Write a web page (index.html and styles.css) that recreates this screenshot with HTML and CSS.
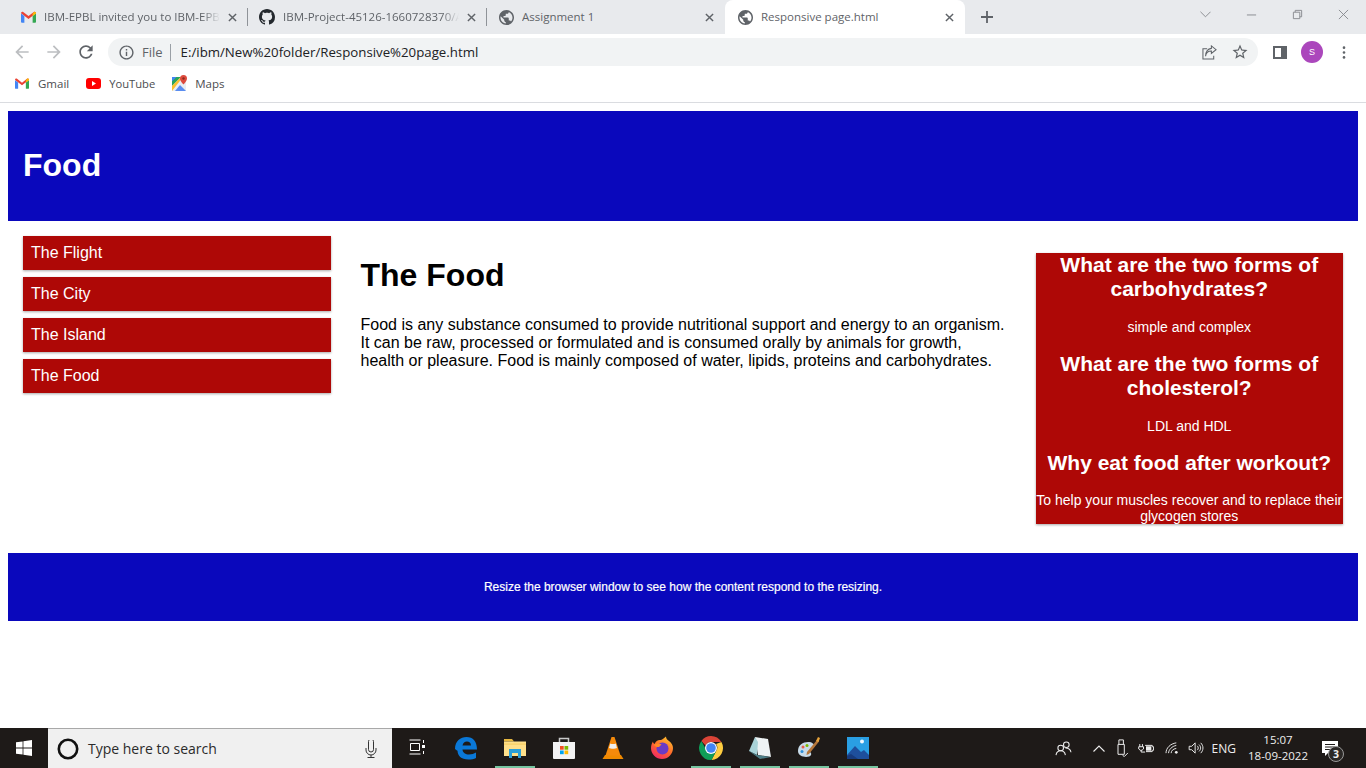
FILE: index.html
```html
<!DOCTYPE html>
<html lang="en">
<head>
<meta charset="utf-8">
<title>Responsive page.html</title>
<link rel="stylesheet" href="styles.css">
</head>
<body>
<div class="tabstrip">
  <div class="tab tab-one">
    <svg class="favicon" viewBox="0 0 16 12"><path fill="#ea4335" d="M0 2Q0 0 2 .4L8 5l6-4.6Q16 0 16 2L8 8z"/><path fill="#4285f4" d="M0 2.2l3.6 2.7V12H1Q0 12 0 11z"/><path fill="#34a853" d="M16 2.2l-3.6 2.7V12H15q1 0 1-1z"/><path fill="#fbbc04" d="M12.4 2.6L14 .4Q16 0 16 2v.2l-3.6 2.7z"/></svg>
    <span class="tab-title">IBM-EPBL invited you to IBM-EPB</span>
    <svg class="tab-x" viewBox="0 0 10 10"><path d="M1 1l8 8M9 1L1 9"/></svg>
  </div>
  <div class="tab">
    <svg class="favicon gh" viewBox="0 0 16 16"><path fill="#24292e" d="M8 0C3.58 0 0 3.58 0 8c0 3.54 2.29 6.53 5.47 7.59.4.07.55-.17.55-.38 0-.19-.01-.82-.01-1.49-2.01.37-2.53-.49-2.69-.94-.09-.23-.48-.94-.82-1.13-.28-.15-.68-.52-.01-.53.63-.01 1.08.58 1.23.82.72 1.21 1.87.87 2.33.66.07-.52.28-.87.51-1.07-1.78-.2-3.64-.89-3.64-3.95 0-.87.31-1.59.82-2.15-.08-.2-.36-1.02.08-2.12 0 0 .67-.21 2.2.82.64-.18 1.32-.27 2-.27.68 0 1.36.09 2 .27 1.53-1.04 2.2-.82 2.2-.82.44 1.1.16 1.92.08 2.12.51.56.82 1.27.82 2.15 0 3.07-1.87 3.75-3.65 3.95.29.25.54.73.54 1.48 0 1.07-.01 1.93-.01 2.2 0 .21.15.46.55.38A8.013 8.013 0 0016 8c0-4.42-3.58-8-8-8z"/></svg>
    <span class="tab-title">IBM-Project-45126-1660728370/A</span>
    <svg class="tab-x" viewBox="0 0 10 10"><path d="M1 1l8 8M9 1L1 9"/></svg>
  </div>
  <div class="tab tab-last">
    <svg class="favicon globe" viewBox="2 2 20 20"><path d="M12 2C6.48 2 2 6.48 2 12s4.48 10 10 10 10-4.48 10-10S17.52 2 12 2zm-1 17.93c-3.95-.49-7-3.85-7-7.93 0-.62.08-1.21.21-1.79L9 15v1c0 1.1.9 2 2 2v1.93zm6.9-2.54c-.26-.81-1-1.39-1.9-1.39h-1v-3c0-.55-.45-1-1-1H8v-2h2c.55 0 1-.45 1-1V7h2c1.1 0 2-.9 2-2v-.41c2.93 1.19 5 4.06 5 7.41 0 2.08-.8 3.97-2.1 5.39z"/></svg>
    <span class="tab-title">Assignment 1</span>
    <svg class="tab-x" viewBox="0 0 10 10"><path d="M1 1l8 8M9 1L1 9"/></svg>
  </div>
  <div class="tab tab-active">
    <svg class="favicon globe" viewBox="2 2 20 20"><path d="M12 2C6.48 2 2 6.48 2 12s4.48 10 10 10 10-4.48 10-10S17.52 2 12 2zm-1 17.93c-3.95-.49-7-3.85-7-7.93 0-.62.08-1.21.21-1.79L9 15v1c0 1.1.9 2 2 2v1.93zm6.9-2.54c-.26-.81-1-1.39-1.9-1.39h-1v-3c0-.55-.45-1-1-1H8v-2h2c.55 0 1-.45 1-1V7h2c1.1 0 2-.9 2-2v-.41c2.93 1.19 5 4.06 5 7.41 0 2.08-.8 3.97-2.1 5.39z"/></svg>
    <span class="tab-title">Responsive page.html</span>
    <svg class="tab-x" viewBox="0 0 10 10"><path d="M1 1l8 8M9 1L1 9"/></svg>
  </div>
  <svg class="newtab" viewBox="0 0 12 12"><path d="M6 0v12M0 6h12"/></svg>
  <div class="winctl">
    <svg class="win-ico chev" viewBox="0 0 12 7"><path d="M.5.5L6 6 11.5.5"/></svg>
    <svg class="win-ico" viewBox="0 0 12 12"><path d="M1 6.500h10"/></svg>
    <svg class="win-ico" viewBox="0 0 12 12"><path d="M1.500 3.500h7v7h-7zM3.500 3.500v-2h7v7h-2"/></svg>
    <svg class="win-ico" viewBox="0 0 12 12"><path d="M1 1l10 10M11 1L1 11"/></svg>
  </div>
</div>

<div class="toolbar">
  <svg class="nav-ico off" viewBox="0 0 24 24"><path d="M20 11H7.830l5.590-5.590L12 4l-8 8 8 8 1.410-1.410L7.830 13H20v-2z"/></svg>
  <svg class="nav-ico off" viewBox="0 0 24 24"><path d="M4 11h12.170l-5.590-5.590L12 4l8 8-8 8-1.410-1.410L16.170 13H4v-2z"/></svg>
  <svg class="nav-ico" viewBox="0 0 24 24"><path d="M17.65 6.35C16.2 4.9 14.21 4 12 4c-4.42 0-7.99 3.58-7.99 8s3.57 8 7.99 8c3.73 0 6.84-2.55 7.73-6h-2.08c-.82 2.33-3.04 4-5.65 4-3.31 0-6-2.69-6-6s2.69-6 6-6c1.66 0 3.14.69 4.22 1.78L13 11h7V4l-2.35 2.35z"/></svg>
  <div class="omnibox">
    <svg class="omni-info" viewBox="0 0 24 24"><path d="M11 7h2v2h-2zm0 4h2v6h-2zm1-9C6.48 2 2 6.48 2 12s4.48 10 10 10 10-4.48 10-10S17.52 2 12 2zm0 18c-4.41 0-8-3.59-8-8s3.59-8 8-8 8 3.59 8 8-3.59 8-8 8z"/></svg>
    <span class="omni-file">File</span>
    <span class="omni-url">E:/ibm/New%20folder/Responsive%20page.html</span>
    <svg class="omni-share" viewBox="0 0 16 16"><path d="M5.500 4H1v11h11.500v-3.500"/><path d="M3.800 12c.4-3.600 3-5.600 6.200-5.600V9L15 5 10 1v2.600C6.200 4 4 7.500 3.800 12z"/></svg>
    <svg class="omni-star" viewBox="0 0 24 24"><path d="M22 9.240l-7.190-.62L12 2 9.190 8.630 2 9.240l5.460 4.730L5.820 21 12 17.270 18.180 21l-1.630-7.030L22 9.240zM12 15.400l-3.760 2.270 1-4.280-3.320-2.880 4.380-.38L12 6.100l1.710 4.040 4.380.38-3.320 2.880 1 4.280L12 15.400z"/></svg>
  </div>
  <svg class="panel-ico" viewBox="0 0 14 13"><path fill-rule="evenodd" d="M0 0h14v13H0zM2 2v9h6V2z"/></svg>
  <div class="avatar">S</div>
  <svg class="dots" viewBox="0 0 4 16"><circle cx="2" cy="2" r="1.600"/><circle cx="2" cy="8" r="1.600"/><circle cx="2" cy="14" r="1.600"/></svg>
</div>

<div class="bookmarks">
  <div class="bm">
    <svg class="bm-gmail" viewBox="0 0 16 12"><path fill="#ea4335" d="M0 2Q0 0 2 .4L8 5l6-4.600Q16 0 16 2L8 8z"/><path fill="#4285f4" d="M0 2.200l3.600 2.700V12H1Q0 12 0 11z"/><path fill="#34a853" d="M16 2.200l-3.600 2.700V12H15q1 0 1-1z"/><path fill="#fbbc04" d="M12.400 2.600L14 .4Q16 0 16 2v.2l-3.600 2.700z"/></svg>
    <span>Gmail</span>
  </div>
  <div class="bm bm-tube">
    <svg class="bm-yt" viewBox="0 0 15 11"><rect width="15" height="11" rx="3" fill="#f00"/><path fill="#fff" d="M6 3l4 2.500L6 8z"/></svg>
    <span>YouTube</span>
  </div>
  <div class="bm">
    <svg class="bm-maps" viewBox="0 0 16 16"><path fill="#e9eef2" d="M0 2h14v14H0z"/><path fill="#2aa45a" d="M0 2h9L0 11z"/><path fill="#4285f4" d="M0 2h4.500L0 6.500z"/><path fill="#fbc02d" d="M0 11l9-9h2L0 16z"/><path fill="#5a8df0" d="M3 16l5-6 6 6z"/><path fill="#dd4b3e" d="M11.500 0A3.500 3.500 0 0 1 15 3.500C15 6 11.500 9.500 11.500 9.500S8 6 8 3.500A3.500 3.500 0 0 1 11.500 0z"/><circle cx="11.500" cy="3.500" r="1.200" fill="#8e2a1e"/></svg>
    <span>Maps</span>
  </div>
</div>

<div class="page">
  <header class="site-header"><h1>Food</h1></header>
  <div class="row">
    <nav class="col col-side">
      <ul class="menu">
        <li>The Flight</li>
        <li>The City</li>
        <li>The Island</li>
        <li>The Food</li>
      </ul>
    </nav>
    <main class="col col-main">
      <h1>The Food</h1>
      <p>Food is any substance consumed to provide nutritional support and energy to an organism. It can be raw, processed or formulated and is consumed orally by animals for growth, health or pleasure. Food is mainly composed of water, lipids, proteins and carbohydrates.</p>
    </main>
    <div class="col col-side">
      <aside class="aside">
        <h2>What are the two forms of carbohydrates?</h2>
        <p>simple and complex</p>
        <h2>What are the two forms of cholesterol?</h2>
        <p>LDL and HDL</p>
        <h2>Why eat food after workout?</h2>
        <p>To help your muscles recover and to replace their glycogen stores</p>
      </aside>
    </div>
  </div>
  <footer class="site-footer"><p>Resize the browser window to see how the content respond to the resizing.</p></footer>
</div>

<div class="taskbar">
  <div class="start"><svg class="winlogo" viewBox="0 0 16 16"><path d="M0 2.300l6.600-.9v6.200H0zM7.400 1.300L16 0v7.600H7.400zM0 8.400h6.600v6.200L0 13.700zM7.400 8.400H16V16l-8.600-1.300z"/></svg></div>
  <div class="search">
    <svg class="cortana" viewBox="0 0 22 22"><circle cx="11" cy="11" r="9.200"/></svg>
    <span class="search-text">Type here to search</span>
    <svg class="mic" viewBox="0 0 12 18"><path d="M3.500 1.500a2.500 2.500 0 0 1 5 0v8a2.500 2.500 0 0 1-5 0zM1 8v2a5 5 0 0 0 10 0V8M6 15v2.500M2.500 17.500h7"/></svg>
  </div>
  <div class="apps">
    <div class="app app-taskview"><svg class="taskview" viewBox="0 0 16 16"><path d="M.5 1h11M.5 15h11M1.500 4.500h9v7h-9zM14.500 1v3M14.500 12v3"/><rect class="tv-dot" x="13" y="6" width="3" height="3"/></svg></div>
    <div class="app">
      <svg class="app-ico" viewBox="0 0 24 24"><path fill="#0a78d7" d="M1 13C1 5 6.500 1 12.500 1 19 1 23 5.500 23 13.500H8.500c.3 3.500 3 5 6.500 5 2.700 0 5-.7 7-2v5.500c-2 1-4.500 1.500-7.500 1.500C7 23.500 3.500 19.500 3.500 14.500c0 .5-1.500-.5-2.500-1.500zM8.500 9.500H17c0-2.500-1.800-4-4-4-2.300 0-4 1.500-4.500 4z"/></svg>
    </div>
    <div class="app app-on">
      <svg class="app-ico" viewBox="0 0 24 24"><path fill="#e6b740" d="M1 3h8l2 2.500H1z"/><path fill="#ffe08a" d="M1 5.500h22V20H1z"/><path fill="#f6cf62" d="M1 7.500h22v1.200H1z"/><path fill="#2b9fd8" d="M6 13h12v9H15v-5H9v5H6z"/></svg>
    </div>
    <div class="app">
      <svg class="app-ico" viewBox="0 0 24 24"><path fill="none" stroke="#c9c9c9" stroke-width="1.500" d="M7.500 7V2.500h9V7"/><path fill="#f3f3f3" d="M1 6h22v16a1 1 0 0 1-1 1H2a1 1 0 0 1-1-1z"/><path fill="#f25022" d="M8 10h3.700v3.700H8z"/><path fill="#7fba00" d="M12.500 10h3.700v3.700h-3.700z"/><path fill="#00a4ef" d="M8 14.500h3.700v3.700H8z"/><path fill="#ffb900" d="M12.500 14.500h3.700v3.700h-3.700z"/></svg>
    </div>
    <div class="app">
      <svg class="app-ico" viewBox="0 0 24 24"><path fill="#f08a00" d="M1.500 23l2.500-4h16l2.500 4z"/><path fill="#f58a0b" d="M10.500 1h3l6 18.500h-15z"/><path fill="#eee" d="M9.300 7.500c1.500.7 4 .7 5.400 0l1.300 4.500c-2 1-6 1-8 0z"/></svg>
    </div>
    <div class="app">
      <svg class="app-ico" viewBox="0 0 24 24"><defs><linearGradient id="ff" x1="0.800" y1="0" x2="0.200" y2="1"><stop offset="0" stop-color="#ffc42c"/><stop offset="0.500" stop-color="#ff6a2b"/><stop offset="1" stop-color="#f0246a"/></linearGradient></defs><path fill="url(#ff)" d="M12 23A11 11 0 0 1 1 12c0-3 1-5 2-6.500 0 1 .5 2 1.500 2.500C6 5 8 3.500 11 4c2-1 4-2.500 5-3.500 0 2 1 3 3 4.500 2.500 2 4 4 4 7a11 11 0 0 1-11 11z"/><circle cx="12.500" cy="12.500" r="6" fill="#6b3bc4"/><path fill="#ff8a24" d="M4 9c2-1.500 5-2 7.500-.5L9 11c-2 .3-4-.5-5-2z"/></svg>
    </div>
    <div class="app app-on">
      <svg class="app-ico" viewBox="0 0 24 24"><path fill="#db4437" d="M12 0a12 12 0 0 1 10.400 6H12a6 6 0 0 0-5.500 3.500L2.400 5A12 12 0 0 1 12 0z"/><path fill="#ffcd40" d="M22.400 6A12 12 0 0 1 12.500 24l4.700-9A6 6 0 0 0 17 8z"/><path fill="#0f9d58" d="M2.400 5A12 12 0 0 0 12.500 24l4.700-9a6 6 0 0 1-10.700-2.500z"/><circle cx="12" cy="12" r="6" fill="#fff"/><circle cx="12" cy="12" r="4.800" fill="#4285f4"/></svg>
    </div>
    <div class="app app-on app-stack">
      <svg class="app-ico" viewBox="0 0 24 24"><path fill="#eef3f4" d="M7 1l13 2 3 18-13-2z"/><path fill="#a9d3d8" d="M7 1L1 15l8 4 1-13z"/><path fill="#4e7f88" d="M1 15l8 4 14 2-11 2z"/></svg>
    </div>
    <div class="app app-on app-stack">
      <svg class="app-ico" viewBox="0 0 24 24"><path fill="#c8dbe8" d="M1 15c0-6 5-9 10-9 4 0 7 2 6 5-1 2-4 1-4 4 0 2 2 2 1 4-1 3-13 3-13-4z"/><circle cx="6" cy="11" r="1.500" fill="#e65f4c"/><circle cx="10" cy="9.500" r="1.500" fill="#7fba00"/><circle cx="5" cy="15.500" r="1.500" fill="#2f8fd8"/><path fill="#b5763a" d="M20 4l2 1.500L12 18l-2.500 1 .5-3z"/><path fill="#e8a33a" d="M19 5l2-4 2 1-1.500 4z"/></svg>
    </div>
    <div class="app app-on">
      <svg class="app-ico" viewBox="0 0 24 24"><path fill="#2a9fe3" d="M1 1h22v22H1z"/><circle cx="16" cy="5.500" r="2" fill="#f0f8fd"/><path fill="#1e4f9c" d="M1 19l8-9 6 6 3-2 5 5v4H1z"/><path fill="#163a7d" d="M1 23v-3l4-2 7 5z"/></svg>
    </div>
  </div>
  <div class="tray">
    <svg class="tray-people" viewBox="0 0 18 16"><circle cx="12" cy="4" r="3"/><circle cx="6" cy="7.500" r="3"/><path d="M1 15c.5-3 2.500-4.500 5-4.500s4.500 1.500 5 4.500M11 7.500c3 0 5.500 1.500 6 4.500"/></svg>
    <svg class="tray-chev" viewBox="0 0 12 7"><path d="M.5 6.500L6 1l5.500 5.500"/></svg>
    <svg class="tray-usb" viewBox="0 0 14 20"><path d="M2 6h7v11H2zM3 6V1h5v5M5 3h.1M6.500 3h.1M7 18l2 1.500 4-4"/></svg>
    <svg class="tray-power" viewBox="0 0 18 12"><path d="M2 1v3M5 1v3M.8 4h5.400v2.500L4.500 8H2.500L.8 6.500zM3.500 8v2H8M8 2.500h8V4h1.500v4H16v1.500H9"/><rect class="tray-fill" x="9" y="3.500" width="6" height="5"/></svg>
    <svg class="tray-wifi" viewBox="0 0 16 14"><path d="M1 13C1 7 6 2 13 1M4 13c0-4 4-8 9-9M7 13c0-2.500 2-5 6-5.500"/><circle class="tray-fill" cx="13" cy="12" r="1.600"/></svg>
    <svg class="tray-vol" viewBox="0 0 18 14"><path d="M1 5h3l4-4v12L4 9H1zM10.500 4.500c1.500 1.500 1.500 3.500 0 5M12.500 3c2.500 2.500 2.500 5.500 0 8M14.500 1c3.500 3.500 3.500 8.500 0 12"/></svg>
    <span class="tray-lang">ENG</span>
    <div class="clock"><span>15:07</span><span>18-09-2022</span></div>
    <div class="notif">
      <svg class="notif-ico" viewBox="0 0 16 15"><path d="M0 0h16v12H6l-3 3v-3H0z"/><path class="notif-lines" d="M3 3.500h10M3 6h10M3 8.500h6"/></svg>
      <span class="badge">3</span>
    </div>
  </div>
</div>
</body>
</html>
```

FILE: styles.css
```css
* { box-sizing: border-box; }
html, body { height: 100%; }
body {
  margin: 0;
  display: flex;
  flex-direction: column;
  height: 100vh;
  overflow: hidden;
  background: #fff;
  font-family: "Liberation Sans", Arial, sans-serif;
}
svg { display: block; flex: none; }

/* Tab strip */
.tabstrip {
  flex: none;
  height: 34px;
  display: flex;
  align-items: stretch;
  padding-left: 8px;
  background: #e8eaed;
  font-family: "Open Sans", sans-serif;
  font-size: 11.5px;
  color: #5f6368;
}
.tab {
  position: relative;
  width: 239px;
  display: flex;
  align-items: center;
  padding: 0 10px 0 13px;
}
.tab::after {
  content: "";
  position: absolute;
  right: 0;
  top: 8px;
  height: 18px;
  width: 1px;
  background: #8f9398;
}
.tab-one { width: 240px; }
.tab-last { width: 238px; }
.tab-last::after { display: none; }
.tab-last .favicon { margin-left: -1px; }
.tab-active {
  width: 240px;
  background: #fff;
  border-radius: 8px 8px 0 0;
}
.tab-active::after { display: none; }
.favicon { width: 15px; height: 12px; margin-right: 8px; }
.favicon.gh { width: 16px; height: 16px; margin-left: -2px; margin-right: 8px; }
.favicon.globe { width: 15px; height: 15px; fill: #5f6368; }
.tab-title {
  flex: 1;
  min-width: 0;
  margin-bottom: 2px;
  white-space: nowrap;
  overflow: hidden;
  -webkit-mask-image: linear-gradient(to right, #000 90%, transparent 100%);
  mask-image: linear-gradient(to right, #000 90%, transparent 100%);
}
.tab-active .tab-title, .tab-last .tab-title { -webkit-mask-image: none; mask-image: none; }
.tab-x {
  width: 9px;
  height: 9px;
  margin-left: 8px;
  margin-right: 1px;
  fill: none;
  stroke: #5f6368;
  stroke-width: 1.6;
}
.newtab {
  width: 12px;
  height: 12px;
  margin: 11px 0 0 16px;
  fill: none;
  stroke: #5f6368;
  stroke-width: 1.8;
}
.winctl {
  margin-left: auto;
  display: flex;
  align-items: flex-start;
}
.win-ico {
  width: 11px;
  height: 11px;
  margin: 9px 17.5px 0;
  fill: none;
  stroke: #85888c;
  stroke-width: 1;
}
.win-ico.chev { height: 7px; margin: 11px 17px 0 0; }

/* Toolbar */
.toolbar {
  flex: none;
  height: 38px;
  display: flex;
  align-items: center;
  padding: 4px 0 6px 12px;
  background: #fff;
}
.nav-ico {
  width: 20px;
  height: 20px;
  margin-right: 12px;
  fill: #5f6368;
}
.nav-ico.off { fill: #bcbec1; }
.omnibox {
  width: 1150px;
  height: 28px;
  display: flex;
  align-items: center;
  padding: 0 9px 0 10px;
  border-radius: 14px;
  background: #f1f3f4;
  font-family: "Open Sans", sans-serif;
  font-size: 13.25px;
  color: #202124;
}
.omni-info { width: 17px; height: 17px; fill: #5f6368; }
.omni-file {
  margin-left: 7px;
  padding-right: 7px;
  border-right: 1px solid #9aa0a6;
  font-size: 13px;
  line-height: 17px;
  color: #5f6368;
}
.omni-url { margin-left: 10px; white-space: nowrap; }
.omni-share {
  width: 15px;
  height: 15px;
  margin-left: auto;
  margin-right: 1px;
  fill: none;
  stroke: #5f6368;
  stroke-width: 1.1;
}
.omni-star { width: 18px; height: 18px; margin-left: 13px; fill: #5f6368; }
.panel-ico { width: 14px; height: 13px; margin-left: 15px; fill: #5f6368; }
.avatar {
  width: 22px;
  height: 22px;
  margin-left: 14px;
  border-radius: 50%;
  background: #ab47bc;
  color: #fff;
  font-size: 9px;
  line-height: 22px;
  text-align: center;
}
.dots { width: 4px; height: 13px; margin-left: 19px; fill: #5f6368; }

/* Bookmarks */
.bookmarks {
  flex: none;
  height: 31px;
  display: flex;
  align-items: center;
  padding: 0 0 8px 15px;
  border-bottom: 1px solid #dadce0;
  background: #fff;
  font-family: "Open Sans", sans-serif;
  font-size: 11.5px;
  color: #4b4d50;
}
.bm { display: flex; align-items: center; margin-right: 17px; }
.bm-tube { margin-right: 17px; font-size: 11.2px; }
.bm-gmail { width: 14px; height: 11px; margin-right: 9px; }
.bm-yt { width: 15px; height: 11px; margin-right: 8px; }
.bm-maps { width: 16px; height: 16px; margin-right: 7px; }

/* Page */
.page {
  flex: 1;
  min-height: 0;
  padding: 8px;
  overflow: hidden;
  color: #000;
  background: #fff;
}
.site-header {
  padding: 15px;
  background: #0a08bc;
  color: #fff;
}
.site-header h1, .col-main h1 {
  margin: 21.44px 0;
  font-size: 32px;
}
.row { display: flex; }
.col { padding: 15px; }
.col-side { width: 25%; }
.col-main { width: 50%; }
.col-main p {
  margin: 0;
  font-size: 16px;
  line-height: 18px;
}
.menu { list-style: none; margin: 0; padding: 0; }
.menu li {
  margin-bottom: 7px;
  padding: 8px;
  background: #ae0806;
  color: #fff;
  font-size: 16px;
  line-height: 18px;
  box-shadow: 0 1px 3px rgba(0, 0, 0, .12), 0 1px 2px rgba(0, 0, 0, .24);
}
.aside {
  background: #ae0806;
  color: #fff;
  text-align: center;
  box-shadow: 0 1px 3px rgba(0, 0, 0, .12), 0 1px 2px rgba(0, 0, 0, .24);
}
.aside h2 {
  margin: 17.43px 0;
  font-size: 21px;
  line-height: 24px;
}
.aside p {
  margin: 14px 0;
  font-size: 14px;
  line-height: 16px;
}
.site-footer {
  padding: 26px 15px;
  background: #0a08bc;
  color: #fff;
  text-align: center;
}
.site-footer p {
  margin: 0;
  font-size: 12px;
  line-height: 16px;
  -webkit-text-stroke: 0.2px #fff;
}

/* Taskbar */
.taskbar {
  flex: none;
  height: 40px;
  display: flex;
  align-items: stretch;
  background: #1e1a18;
  font-family: "Open Sans", sans-serif;
  color: #fff;
}
.start {
  width: 48px;
  display: flex;
  align-items: center;
  justify-content: center;
}
.winlogo { width: 16px; height: 16px; fill: #fff; }
.search {
  width: 344px;
  display: flex;
  align-items: center;
  padding: 0 15px 0 9px;
  background: #f0f0f0;
  border-top: 1px solid #a8a8a8;
  color: #2b2b2b;
  font-size: 14px;
}
.cortana {
  width: 22px;
  height: 22px;
  margin-right: 9px;
  fill: none;
  stroke: #111;
  stroke-width: 2.6;
}
.search-text { flex: 1; }
.mic {
  width: 12px;
  height: 18px;
  fill: none;
  stroke: #333;
  stroke-width: 1;
}
.apps { display: flex; padding-left: 1px; }
.app {
  width: 49px;
  display: flex;
  align-items: center;
  justify-content: center;
  border-bottom: 2px solid transparent;
}
.app-on { border-bottom-color: #76c5a0; margin: 0 4.500px; width: 40px; }
.app-ico { width: 24px; height: 24px; margin-top: 2px; }
.app-taskview { width: 48px; }
.taskview {
  width: 16px;
  height: 16px;
  fill: none;
  stroke: #fff;
  stroke-width: 1;
}
.tv-dot { fill: #fff; stroke: none; }
.tray {
  margin-left: auto;
  display: flex;
  align-items: center;
  font-size: 12px;
  color: #eee;
}
.tray svg { fill: none; stroke: #eee; stroke-width: 1.1; }
.tray svg .tray-fill { fill: #eee; stroke: none; }
.tray-people { width: 17px; height: 15px; }
.tray-chev { width: 12px; height: 7px; margin-left: 21px; }
.tray-usb { width: 13px; height: 18px; margin-left: 11px; }
.tray-power { width: 16px; height: 11px; margin-left: 9px; }
.tray-wifi { width: 14px; height: 12px; margin-left: 11px; }
.tray-vol { width: 16px; height: 12px; margin-left: 9px; }
.tray-lang { margin-left: 8px; }
.clock {
  display: flex;
  flex-direction: column;
  align-items: center;
  width: 70px;
  margin-left: 7px;
  font-size: 11.5px;
  line-height: 16px;
}
.notif { position: relative; width: 24px; margin: 0 21px 0 8px; }
.tray svg.notif-ico { width: 16px; height: 15px; margin-left: 1px; fill: #fff; stroke: none; }
.tray svg .notif-lines { stroke: #1e1a18; stroke-width: 1; fill: none; }
.badge {
  position: absolute;
  left: 7px;
  top: 5px;
  width: 16px;
  height: 16px;
  border: 1px solid #999;
  border-radius: 50%;
  background: #2b2826;
  font-size: 10.500px;
  font-weight: 700;
  line-height: 14px;
  text-align: center;
}
```
